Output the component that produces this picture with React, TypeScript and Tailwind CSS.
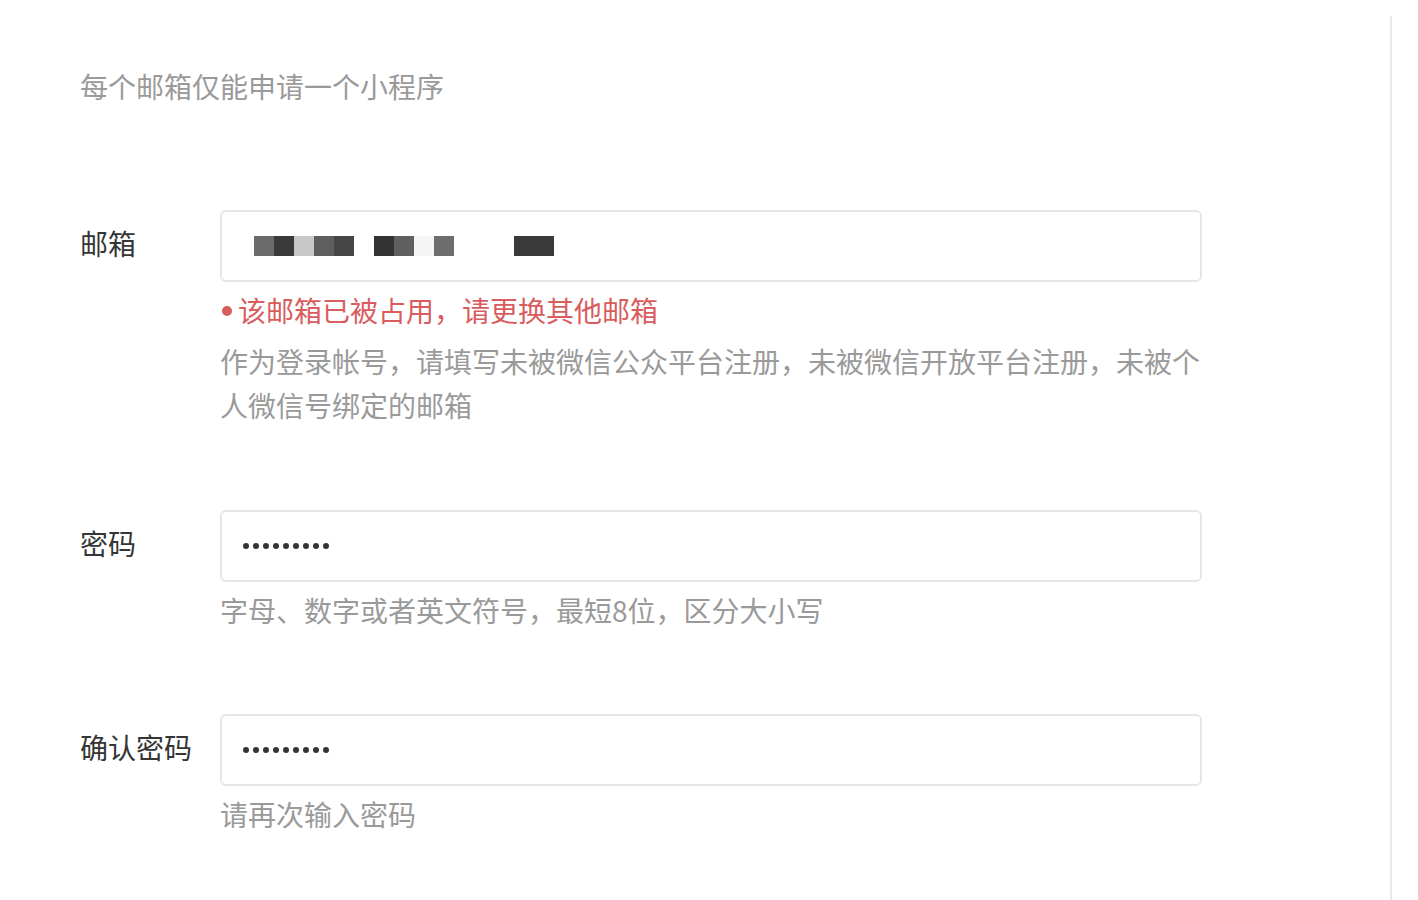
import React from "react";

const font = { fontFamily: '"Noto Sans CJK SC", "Noto Sans", sans-serif' };

function Dots() {
  return (
    <div className="flex items-center gap-[4px]">
      {Array.from({ length: 9 }).map((_, i) => (
        <span key={i} className="block w-[6px] h-[6px] rounded-full bg-[#333333]" />
      ))}
    </div>
  );
}

const blocks1 = ["#6b6b6b", "#3a3a3a", "#c8c8c8", "#5e5e5e", "#464646"];
const blocks2 = ["#333333", "#5f5f5f", "#f5f5f5", "#6d6d6d"];

function Blurred() {
  return (
    <div className="flex items-center">
      <div className="flex">
        {blocks1.map((c, i) => (
          <span key={i} className="block w-[20px] h-[20px]" style={{ background: c }} />
        ))}
      </div>
      <div className="flex ml-[20px]">
        {blocks2.map((c, i) => (
          <span key={i} className="block w-[20px] h-[20px]" style={{ background: c }} />
        ))}
      </div>
      <span className="block ml-[60px] w-[40px] h-[20px] bg-[#3a3a3a]" />
    </div>
  );
}

function Input({ children }: { children: React.ReactNode }) {
  return (
    <div className="w-[982px] h-[72px] border-2 border-[#e6e6ea] rounded-[6px] bg-white flex items-center">
      {children}
    </div>
  );
}

function Row({
  label,
  input,
  children,
}: {
  label: string;
  input: React.ReactNode;
  children: React.ReactNode;
}) {
  return (
    <div className="flex">
      <div className="w-[140px] h-[72px] flex items-center pb-[6px] text-[#353535]">{label}</div>
      <div className="flex flex-col">
        {input}
        <div className="mt-[6px]">{children}</div>
      </div>
    </div>
  );
}

export default function App() {
  return (
    <div className="bg-white w-[1418px] h-[900px] overflow-hidden text-[28px] leading-[44px]" style={font}>
      <div className="mt-[16px] w-[1392px] h-[884px] border-r-2 border-[#e8e8ee] pl-[80px] pt-[48px]">
        <div className="text-[#9a9a9a]">每个邮箱仅能申请一个小程序</div>

        <div className="mt-[102px]">
          <Row
            label="邮箱"
            input={
              <Input>
                <div className="pl-[32px]">
                  <Blurred />
                </div>
              </Input>
            }
          >
            <div className="text-[#d95c5e] flex items-center">
              <span className="inline-block w-[10px] h-[10px] rounded-full bg-[#d95c5e] ml-[2px] mr-[6px] mt-[2px]" />
              该邮箱已被占用，请更换其他邮箱
            </div>
            <div className="mt-[7px] w-[990px] text-[#9a9a9a]">
              作为登录帐号，请填写未被微信公众平台注册，未被微信开放平台注册，未被个人微信号绑定的邮箱
            </div>
          </Row>
        </div>

        <div className="mt-[83px]">
          <Row
            label="密码"
            input={
              <Input>
                <div className="pl-[21px]">
                  <Dots />
                </div>
              </Input>
            }
          >
            <div className="text-[#9a9a9a]">字母、数字或者英文符号，最短8位，区分大小写</div>
          </Row>
        </div>

        <div className="mt-[82px]">
          <Row
            label="确认密码"
            input={
              <Input>
                <div className="pl-[21px]">
                  <Dots />
                </div>
              </Input>
            }
          >
            <div className="text-[#9a9a9a]">请再次输入密码</div>
          </Row>
        </div>
      </div>
    </div>
  );
}
